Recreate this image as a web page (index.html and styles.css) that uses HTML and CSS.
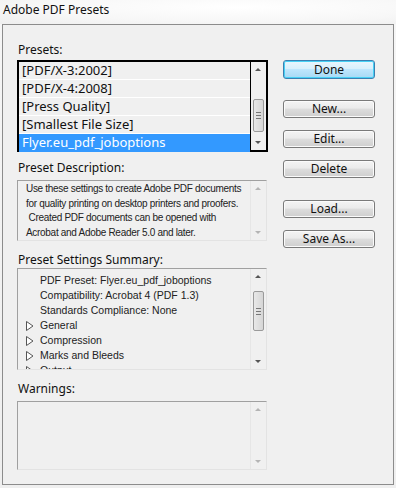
FILE: index.html
```html
<!DOCTYPE html>
<html>
<head>
<meta charset="utf-8">
<link rel="stylesheet" href="styles.css">
</head>
<body>
<div class="title">Adobe PDF Presets</div>
<div class="panel">
  <div class="left">
    <div class="label label-presets">Presets:</div>
    <div class="listbox">
      <div class="items">
        <div class="row">[PDF/X-3:2002]</div>
        <div class="row">[PDF/X-4:2008]</div>
        <div class="row">[Press Quality]</div>
        <div class="row">[Smallest File Size]</div>
        <div class="row selected">Flyer.eu_pdf_joboptions</div>
      </div>
      <div class="sb sb-list">
        <div class="arrow up"></div>
        <div class="track"><div class="thumb thumb-list"><span class="grip"></span></div></div>
        <div class="arrow down"></div>
      </div>
    </div>

    <div class="label label-desc">Preset Description:</div>
    <div class="box desc">
      <div class="desc-text">
        <div class="dline">Use these settings to create Adobe PDF documents</div>
        <div class="dline">for quality printing on desktop printers and proofers.</div>
        <div class="dline">&nbsp;Created PDF documents can be opened with</div>
        <div class="dline">Acrobat and Adobe Reader 5.0 and later.</div>
      </div>
      <div class="sb sb-flat">
        <div class="arrow up faint"></div>
        <div class="track"></div>
        <div class="arrow down faint"></div>
      </div>
    </div>

    <div class="label label-sum">Preset Settings Summary:</div>
    <div class="box summary">
      <div class="sum-list">
        <div class="srow"><span class="tw"></span>PDF Preset: Flyer.eu_pdf_joboptions</div>
        <div class="srow"><span class="tw"></span>Compatibility: Acrobat 4 (PDF 1.3)</div>
        <div class="srow"><span class="tw"></span>Standards Compliance: None</div>
        <div class="srow"><span class="tw"><svg width="8" height="10" viewBox="0 0 8 10"><polygon points="0.5,0.5 7,5 0.5,9.5" fill="#fff" stroke="#555" stroke-width="1"/></svg></span>General</div>
        <div class="srow"><span class="tw"><svg width="8" height="10" viewBox="0 0 8 10"><polygon points="0.5,0.5 7,5 0.5,9.5" fill="#fff" stroke="#555" stroke-width="1"/></svg></span>Compression</div>
        <div class="srow"><span class="tw"><svg width="8" height="10" viewBox="0 0 8 10"><polygon points="0.5,0.5 7,5 0.5,9.5" fill="#fff" stroke="#555" stroke-width="1"/></svg></span>Marks and Bleeds</div>
        <div class="srow"><span class="tw"><svg width="8" height="10" viewBox="0 0 8 10"><polygon points="0.5,0.5 7,5 0.5,9.5" fill="#fff" stroke="#555" stroke-width="1"/></svg></span>Output</div>
      </div>
      <div class="sb sb-flat">
        <div class="arrow up"></div>
        <div class="track"><div class="thumb thumb-sum"><span class="grip"></span></div></div>
        <div class="arrow down"></div>
      </div>
    </div>

    <div class="label label-warn">Warnings:</div>
    <div class="box warn">
      <div class="warn-body"></div>
      <div class="sb sb-flat">
        <div class="arrow up faint"></div>
        <div class="track"></div>
        <div class="arrow down faint"></div>
      </div>
    </div>
  </div>

  <div class="right">
    <button class="btn done">Done</button>
    <button class="btn b-new">New...</button>
    <button class="btn b-edit">Edit...</button>
    <button class="btn b-del">Delete</button>
    <button class="btn b-load">Load...</button>
    <button class="btn b-save">Save As...</button>
  </div>
</div>
</body>
</html>
```
FILE: styles.css
```css
html, body {
  margin: 0;
  padding: 0;
}
body {
  width: 396px;
  height: 488px;
  background: linear-gradient(180deg, #f6f6f6 0%, #efefef 100%);
  font-family: "Noto Sans", "Open Sans", sans-serif;
  color: #000;
  overflow: hidden;
}
.title {
  height: 24px;
  line-height: 20px;
  padding-left: 3px;
  font-size: 12px;
  color: #111;
  background: radial-gradient(ellipse at 60% 30%, #ffffff 0%, #f7f7f7 60%, #eeeeee 100%);
}
.panel {
  margin: 0 2px 0 2px;
  height: 459px;
  border: 1px solid #8c8c8c;
  background: #f0f0f0;
  display: flex;
  padding-left: 14px;
  gap: 15px;
}
.left {
  width: 251px;
  display: flex;
  flex-direction: column;
}
.label {
  height: 16px;
  line-height: 16px;
  font-size: 12px;
  color: #111;
  padding-left: 1px;
  flex-shrink: 0;
}
.label-presets { margin-top: 17px; margin-bottom: 2px; }
.label-desc { margin-top: 8px; margin-bottom: 4px; }
.label-sum { margin-top: 11px; margin-bottom: 0px; }
.label-warn { margin-top: 11px; margin-bottom: 4px; }

/* presets list */
.listbox {
  height: 88px;
  flex-shrink: 0;
  border: 2px solid #000;
  background: #fff;
  display: flex;
}
.items {
  flex: 1;
  padding-top: 0;
  border-right: 1px solid #000;
}
.row {
  height: 17px;
  line-height: 17px;
  padding-left: 3px;
  font-size: 13px;
  color: #111;
  border-bottom: 1px solid #fff;
  background: #f0f0f0;
}
.row.selected {
  background: #3399ff;
  color: #fff;
  border-bottom: none;
  height: 18px;
}

/* scrollbars */
.sb {
  width: 15px;
  flex-shrink: 0;
  display: flex;
  flex-direction: column;
  align-items: center;
}
.sb-list { background: #f0f0f0; }
.sb-flat {
  background: #f0f0f0;
  border-left: 1px solid #e6e6e6;
}
.arrow {
  height: 15px;
  width: 15px;
  position: relative;
}
.arrow::after {
  content: "";
  position: absolute;
  left: 4px;
  width: 0;
  height: 0;
  border-left: 3px solid transparent;
  border-right: 3px solid transparent;
}
.arrow.up::after { top: 6px; border-bottom: 3px solid #555; }
.arrow.down::after { top: 6px; border-top: 3px solid #555; }
.arrow.faint.up::after { border-bottom-color: #b4b4b4; }
.arrow.faint.down::after { border-top-color: #b4b4b4; }
.track {
  flex: 1;
  width: 15px;
  display: flex;
  flex-direction: column;
}
.thumb {
  width: 11px;
  margin-left: 2px;
  border: 1px solid #9a9a9a;
  border-radius: 2px;
  background: linear-gradient(90deg, #e8e8e8, #d6d6d6);
  display: flex;
  align-items: center;
  justify-content: center;
  box-sizing: border-box;
}
.thumb-list { height: 33px; margin-top: 22px; }
.thumb-sum { height: 40px; margin-top: 7px; }
.grip {
  width: 5px;
  height: 5px;
  border-top: 1px solid #777;
  border-bottom: 1px solid #777;
  position: relative;
}
.grip::after {
  content: "";
  position: absolute;
  left: 0;
  right: 0;
  top: 2px;
  border-top: 1px solid #777;
}

/* generic boxes */
.box {
  display: flex;
  flex-shrink: 0;
  border: 1px solid #a0a0a0;
  border-right-color: #e3e3e3;
  border-bottom-color: #e3e3e3;
  background: #f0f0f0;
  overflow: hidden;
}
.desc { height: 59px; width: 248px; }
.desc-text {
  flex: 1;
  padding: 1px 0 0 8px;
  font-family: "Liberation Sans", Arial, sans-serif;
  font-size: 10px;
  line-height: 14.5px;
  color: #222;
  overflow: hidden;
}
.dline {
  white-space: nowrap;
  letter-spacing: -0.3px;
}
.summary { height: 100px; width: 248px; }
.sum-list {
  flex: 1;
  padding-top: 4px;
  overflow: hidden;
}
.srow {
  height: 15px;
  line-height: 15px;
  font-family: "Liberation Sans", Arial, sans-serif;
  font-size: 10.5px;
  color: #222;
  display: flex;
  align-items: center;
}
.tw {
  width: 22px;
  padding-left: 8px;
  box-sizing: border-box;
  display: flex;
  align-items: center;
}
.warn { height: 67px; width: 248px; }
.warn-body { flex: 1; }

/* buttons */
.right {
  width: 92px;
  display: flex;
  flex-direction: column;
}
.btn {
  width: 92px;
  height: 18px;
  padding: 0;
  font-family: "Noto Sans", "Open Sans", sans-serif;
  font-size: 12px;
  line-height: 14px;
  color: #111;
  border: 1px solid #7a7a7a;
  border-radius: 3px;
  background: linear-gradient(180deg, #f4f4f4 0%, #ebebeb 45%, #dddddd 50%, #cfcfcf 100%);
  box-shadow: inset 0 0 0 1px #fbfbfb;
}
.done {
  height: 19px;
  margin-top: 35px;
  border: 1px solid #3c7fb1;
  background: linear-gradient(180deg, #eaf6fd 0%, #d9f0fc 45%, #bee6fd 50%, #a7d9f5 100%);
  box-shadow: inset 0 0 0 1px #48d1f5;
}
.b-new { margin-top: 21px; }
.b-edit { margin-top: 12px; }
.b-del { margin-top: 12px; }
.b-load { margin-top: 22px; }
.b-save { margin-top: 12px; }
```
